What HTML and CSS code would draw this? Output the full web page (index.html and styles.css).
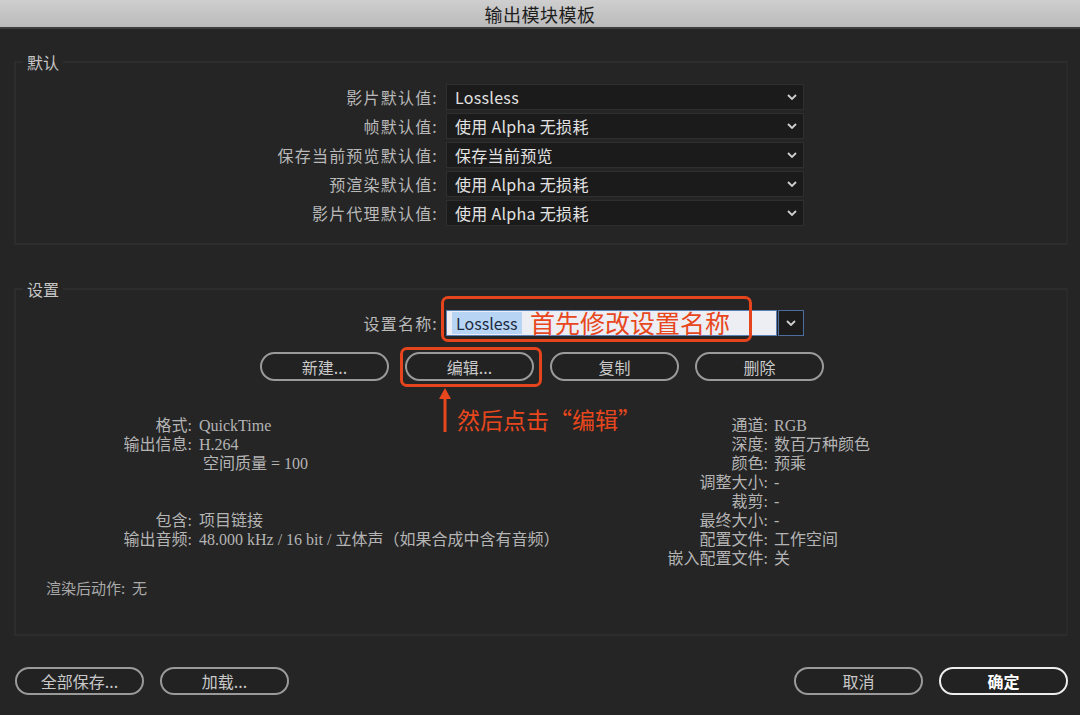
FILE: index.html
```html
<!doctype html>
<html lang="zh-CN">
<head>
  <meta charset="UTF-8">
  <title>输出模块模板</title>
  <link rel="stylesheet" href="styles.css">
</head>
<body>
<div class="titlebar">输出模块模板</div>

<div class="dialog">
  <!-- defaults -->
  <fieldset class="group group--defaults">
    <legend class="group__title">默认</legend>
    <div class="form">
      <span class="form__label">影片默认值:</span>
      <div class="select"><span>Lossless</span><svg class="chevron" viewBox="0 0 10 6"><path d="M1 1l4 4 4-4"/></svg></div>

      <span class="form__label">帧默认值:</span>
      <div class="select"><span>使用 Alpha 无损耗</span><svg class="chevron" viewBox="0 0 10 6"><path d="M1 1l4 4 4-4"/></svg></div>

      <span class="form__label">保存当前预览默认值:</span>
      <div class="select"><span>保存当前预览</span><svg class="chevron" viewBox="0 0 10 6"><path d="M1 1l4 4 4-4"/></svg></div>

      <span class="form__label">预渲染默认值:</span>
      <div class="select"><span>使用 Alpha 无损耗</span><svg class="chevron" viewBox="0 0 10 6"><path d="M1 1l4 4 4-4"/></svg></div>

      <span class="form__label">影片代理默认值:</span>
      <div class="select"><span>使用 Alpha 无损耗</span><svg class="chevron" viewBox="0 0 10 6"><path d="M1 1l4 4 4-4"/></svg></div>
    </div>
  </fieldset>

  <!-- settings -->
  <fieldset class="group group--settings">
    <legend class="group__title">设置</legend>

    <div class="form">
      <span class="form__label">设置名称:</span>
      <div class="name-field">
        <span class="name-field__input"><span class="name-field__sel">Lossless</span></span>
        <span class="name-field__drop"><svg class="chevron" viewBox="0 0 10 6"><path d="M1 1l4 4 4-4"/></svg></span>
        <span class="mark mark--name"></span>
        <span class="note note--name">首先修改设置名称</span>
      </div>
    </div>

    <div class="actions">
      <button class="btn">新建...</button>
      <div class="btn-wrap">
        <button class="btn">编辑...</button>
        <span class="mark mark--edit"></span>
        <svg class="arrow" viewBox="0 0 12 44"><path d="M6 44V8"/><path class="arrow__head" d="M6 0L12 11H0z"/></svg>
        <span class="note note--edit">然后点击“编辑”</span>
      </div>
      <button class="btn">复制</button>
      <button class="btn">删除</button>
    </div>

    <div class="info">
      <dl class="info__col info__col--left">
        <dt>格式:</dt><dd>QuickTime</dd>
        <dt>输出信息:</dt><dd>H.264</dd>
        <dt></dt><dd class="indent">空间质量 = 100</dd>
        <dt></dt><dd></dd>
        <dt></dt><dd></dd>
        <dt>包含:</dt><dd>项目链接</dd>
        <dt>输出音频:</dt><dd>48.000 kHz / 16 bit / 立体声（如果合成中含有音频）</dd>
      </dl>
      <dl class="info__col info__col--right">
        <dt>通道:</dt><dd>RGB</dd>
        <dt>深度:</dt><dd>数百万种颜色</dd>
        <dt>颜色:</dt><dd>预乘</dd>
        <dt>调整大小:</dt><dd>-</dd>
        <dt>裁剪:</dt><dd>-</dd>
        <dt>最终大小:</dt><dd>-</dd>
        <dt>配置文件:</dt><dd>工作空间</dd>
        <dt>嵌入配置文件:</dt><dd>关</dd>
      </dl>
    </div>

    <p class="post-render">渲染后动作: &nbsp;无</p>
  </fieldset>

  <div class="footer">
    <div class="footer__side">
      <button class="btn">全部保存...</button>
      <button class="btn">加载...</button>
    </div>
    <div class="footer__side">
      <button class="btn">取消</button>
      <button class="btn btn--primary">确定</button>
    </div>
  </div>
</div>
</body>
</html>
```

FILE: styles.css
```css
body {
  margin: 0;
  width: 1080px;
  height: 715px;
  overflow: hidden;
  background: #252525;
  color: #bdbdbd;
  font-family: "Noto Sans CJK SC", "Noto Sans", sans-serif;
  font-size: 16px;
}

/* Title bar */

.titlebar {
  height: 27px;
  line-height: 28px;
  text-align: center;
  font-size: 18px;
  letter-spacing: .5px;
  color: #1e1e1e;
  background: linear-gradient(#cfcfcf, #bababa);
  border-bottom: 2px solid #3c3c3c;
}

.dialog {
  padding: 22px 12px 0 14px;
}

/* Group boxes */

.group {
  margin: 0;
  padding: 0;
  min-width: 0;
  border: 2px solid #2d2d2d;
  border-right-color: #2a2a2a;
}

.group__title {
  margin-left: 7px;
  padding: 0 4px;
  line-height: 22px;
  color: #c6c6c6;
}

.group--defaults {
  padding: 11px 0 17px;
}

.group--settings {
  margin-top: 33px;
  padding: 10px 0 37px;
}

/* Label / field rows */

.form {
  display: grid;
  grid-template-columns: 422px 358px;
  column-gap: 8px;
  row-gap: 3px;
}

.form__label {
  text-align: right;
  line-height: 26px;
  letter-spacing: 1.2px;
  color: #b9b9b9;
}

.select {
  display: flex;
  align-items: center;
  justify-content: space-between;
  height: 26px;
  padding: 0 6px 0 8px;
  box-sizing: border-box;
  background: #1b1b1b;
  border: 1px solid #2f2f2f;
  color: #e2e2e2;
  letter-spacing: .3px;
}

.chevron {
  width: 10px;
  height: 6px;
  fill: none;
  stroke: #d0d0d0;
  stroke-width: 1.8;
}

/* Setting name field */

.name-field {
  position: relative;
  display: flex;
  height: 26px;
}

.name-field__input {
  flex: 1;
  display: flex;
  align-items: center;
  padding-left: 5px;
  background: #eceef4;
  border: 1px solid #5a7fb6;
}

.name-field__sel {
  padding: 0 4px;
  line-height: 22px;
  background: #b8d4f4;
  color: #1c2a3e;
}

.name-field__drop {
  display: flex;
  align-items: center;
  justify-content: center;
  width: 24px;
  margin-left: 1px;
  background: #1c1c1c;
  border: 1px solid #4d6d9c;
}

/* Annotations drawn on top of the dialog */

.mark {
  position: absolute;
  border: 3px solid #e5441c;
  border-radius: 7px;
  box-sizing: border-box;
}

.mark--name {
  left: -5px;
  top: -14px;
  width: 311px;
  height: 46px;
}

.mark--edit {
  left: -5px;
  top: -5px;
  width: 142px;
  height: 40px;
}

.note {
  position: absolute;
  color: #e8471d;
  white-space: nowrap;
}

.note--name {
  left: 84px;
  top: -3px;
  font-size: 25px;
  line-height: 30px;
}

.note--edit {
  left: 52px;
  top: 53px;
  font-size: 23px;
  line-height: 28px;
}

.arrow {
  position: absolute;
  left: 34px;
  top: 36px;
  width: 12px;
  height: 44px;
}

.arrow path {
  stroke: #e8471d;
  stroke-width: 3;
}

.arrow .arrow__head {
  fill: #e8471d;
  stroke: none;
}

/* Buttons */

.actions {
  display: flex;
  gap: 16px;
  margin: 16px 0 0 244px;
}

.btn-wrap {
  position: relative;
}

.btn {
  width: 129px;
  height: 29px;
  padding: 0;
  background: #222;
  border: 2px solid #9a9a9a;
  border-radius: 15px;
  color: #c9c9c9;
  font-family: inherit;
  font-size: 16px;
  line-height: 24px;
}

.btn--primary {
  border-color: #ededed;
  color: #fff;
  font-weight: 700;
}

/* Summary */

.info {
  display: flex;
  align-items: flex-start;
  margin-top: 35px;
  font-family: "Liberation Serif", "Noto Sans CJK SC", serif;
  font-size: 16px;
  line-height: 19px;
  color: #b4b4b4;
}

.info__col {
  display: grid;
  column-gap: 7px;
  margin: 0;
}

.info__col dt {
  text-align: right;
  height: 19px;
}

.info__col dd {
  margin: 0;
  height: 19px;
  white-space: nowrap;
}

.info__col--left {
  grid-template-columns: 176px 460px;
}

.info__col--right {
  grid-template-columns: 104px auto;
  margin-left: 5px;
  column-gap: 6px;
}

.indent {
  padding-left: 4px;
}

.post-render {
  margin: 10px 0 0 30px;
  line-height: 19px;
  font-size: 15px;
  color: #a9a9a9;
}

/* Footer */

.footer {
  display: flex;
  justify-content: space-between;
  margin-top: 31px;
  padding-left: 1px;
}

.footer__side {
  display: flex;
  gap: 16px;
}

.footer .btn {
  height: 28px;
}
```
